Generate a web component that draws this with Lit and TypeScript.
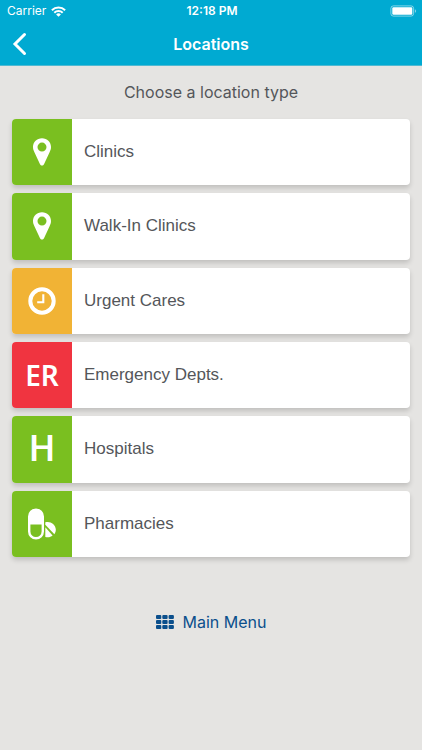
import { LitElement, html, css, svg } from "lit";
import { customElement } from "lit/decorators.js";

type Kind = "pin" | "clock" | "er" | "h" | "pills";

interface LocationType {
  label: string;
  tone: "green" | "amber" | "red";
  kind: Kind;
}

const LOCATION_TYPES: LocationType[] = [
  { label: "Clinics", tone: "green", kind: "pin" },
  { label: "Walk-In Clinics", tone: "green", kind: "pin" },
  { label: "Urgent Cares", tone: "amber", kind: "clock" },
  { label: "Emergency Depts.", tone: "red", kind: "er" },
  { label: "Hospitals", tone: "green", kind: "h" },
  { label: "Pharmacies", tone: "green", kind: "pills" },
];

const pin = html`<svg width="20" height="28" viewBox="0 0 20 28" aria-hidden="true">
  <path fill="#fff" fill-rule="evenodd" d="M10 0.3C4.9 0.3 1 4.200 1 9c0 2 .6 3.500 1.300 5l5.700 12.200c.8 1.800 3.200 1.800 4 0L17.700 14c.7-1.500 1.300-3 1.300-5 0-4.800-3.900-8.700-9-8.700zm0 4.300a4.500 4.500 0 1 1 0 9 4.500 4.500 0 0 1 0-9z"/>
</svg>`;

const clock = html`<svg width="28" height="28" viewBox="0 0 28 28" aria-hidden="true">
  <circle cx="14" cy="14" r="11.700" fill="none" stroke="#fff" stroke-width="4"/>
  <path d="M15.300 7.300v8H9.200" fill="none" stroke="#fff" stroke-width="2.100"/>
</svg>`;

const pills = html`<svg width="30" height="32" viewBox="0 0 30 32" aria-hidden="true">
  <rect x="2.200" y="1.700" width="13.600" height="28.600" rx="6.800" fill="none" stroke="#fff" stroke-width="2.400"/>
  <path fill="#fff" d="M2 16.500V9a7 7 0 0 1 14 0v7.500z"/>
  <path fill="#fff" d="M18.300 14.300c4.500-1.600 10.200 1.500 10.500 7.300 0 2-.5 3.300-1.400 4.600L18.300 16.700z"/>
  <path fill="#fff" d="M18.300 19.200l7.300 8.400c-2 1.700-4.800 2.200-7.300 1.300z"/>
</svg>`;

const GLYPHS: Record<Kind, unknown> = {
  pin,
  clock,
  pills,
  er: html`<span class="er" aria-hidden="true">ER</span>`,
  h: html`<span class="h" aria-hidden="true">H</span>`,
};

@customElement("status-bar")
export class StatusBar extends LitElement {
  static styles = css`
    :host {
      display: grid;
      grid-template-columns: 1fr auto 1fr;
      align-items: center;
      height: 22px;
      padding: 0 5px 0 7px;
      font: 12px/22px Inter, sans-serif;
      color: #fff;
    }
    .carrier {
      display: flex;
      align-items: center;
      gap: 5px;
    }
    .time {
      font-weight: 600;
    }
    .battery {
      justify-self: end;
    }
    svg {
      display: block;
    }
  `;

  render() {
    return html`
      <div class="carrier">
        <span>Carrier</span>
        <svg width="15" height="11" viewBox="0 0 15 11" aria-label="Wi-Fi">
          <g fill="none" stroke="#fff" stroke-width="2">
            <path d="M0.900 4.200a9.400 9.400 0 0 1 13.200 0"/>
            <path d="M3.300 6.700a6 6 0 0 1 8.400 0"/>
          </g>
          <path fill="#fff" d="M7.500 10.800L5.100 8.400a3.400 3.400 0 0 1 4.800 0z"/>
        </svg>
      </div>
      <span class="time">12:18 PM</span>
      <svg class="battery" width="27" height="12" viewBox="0 0 27 12" aria-label="Battery">
        <rect x="0.900" y="0.900" width="22.700" height="10.200" rx="2.500" fill="none" stroke="#fff" stroke-opacity=".5"/>
        <rect x="2.300" y="2.300" width="20" height="7.400" rx="1.200" fill="#fff"/>
        <path d="M24.900 4.200c1.600.5 1.600 3.100 0 3.600z" fill="#fff" fill-opacity=".5"/>
      </svg>
    `;
  }
}

@customElement("app-root")
export class AppRoot extends LitElement {
  static styles = css`
    :host {
      display: flex;
      flex-direction: column;
      min-height: 100vh;
      background: #e5e4e2;
      color: #54565a;
    }
    * {
      box-sizing: border-box;
    }
    svg {
      display: block;
    }
    .top {
      background: #00aad2;
      color: #fff;
      border-bottom: 1px solid #4fb9d2;
    }
    .nav {
      display: grid;
      grid-template-columns: 40px 1fr 40px;
      align-items: center;
      height: 43px;
    }
    .title {
      margin: 0;
      text-align: center;
      font: 600 16px/24px Inter, sans-serif;
    }
    button {
      border: 0;
      margin: 0;
      padding: 0;
      background: none;
      color: inherit;
      cursor: pointer;
    }
    .back {
      padding-left: 12px;
    }
    .prompt {
      margin: 0;
      padding: 14px 0;
      text-align: center;
      font: 16px/25px Inter, sans-serif;
    }
    .list {
      display: grid;
      grid-auto-rows: 1fr;
      gap: 8px;
      min-height: 438px;
      margin: 0 12px;
      padding: 0;
      list-style: none;
    }
    .item {
      display: flex;
    }
    .row {
      display: flex;
      flex: 1;
      align-items: stretch;
      overflow: hidden;
      border-radius: 4px;
      background: #fff;
      box-shadow: 0 3px 5px rgba(0, 0, 0, 0.16);
      font: 17px/24px "Liberation Sans", Arial, sans-serif;
      text-align: left;
    }
    .tile {
      display: flex;
      align-items: center;
      justify-content: center;
      width: 60px;
      color: #fff;
    }
    .green {
      background: #7abf20;
    }
    .amber {
      background: #f1b335;
    }
    .red {
      background: #f03440;
    }
    .er {
      font: 600 28px/40px "Noto Sans", sans-serif;
    }
    .h {
      font: 500 36px/40px Roboto, sans-serif;
    }
    .label {
      align-self: center;
      padding: 0 12px;
    }
    .footer {
      display: flex;
      justify-content: center;
      padding: 52px 0;
    }
    .menu {
      display: flex;
      align-items: center;
      gap: 9px;
      color: #0b4f8c;
      font: 16px/26px Inter, sans-serif;
      text-decoration: none;
    }
  `;

  render() {
    return html`
      <header class="top">
        <status-bar></status-bar>
        <div class="nav">
          <button class="back" aria-label="Back">
            <svg width="16" height="24" viewBox="0 0 16 24" aria-hidden="true">
              <path d="M12.500 2.500L3 12l9.500 9.500" fill="none" stroke="#fff" stroke-width="3" stroke-linecap="round" stroke-linejoin="miter"/>
            </svg>
          </button>
          <h1 class="title">Locations</h1>
        </div>
      </header>
      <main>
        <p class="prompt">Choose a location type</p>
        <ul class="list">
          ${LOCATION_TYPES.map(
            (t) => html`<li class="item">
              <button class="row">
                <span class="tile ${t.tone}">${GLYPHS[t.kind]}</span>
                <span class="label">${t.label}</span>
              </button>
            </li>`
          )}
        </ul>
      </main>
      <footer class="footer">
        <a class="menu" href="#menu">
          <svg width="18" height="14" viewBox="0 0 18 14" aria-hidden="true">
            ${[0, 1, 2].map((r) =>
              [0, 1, 2].map(
                (c) => svg`<rect x=${c * 6.3} y=${r * 5} width="5.300" height="4" rx="1" fill="#0b4f8c"/>`
              )
            )}
          </svg>
          <span>Main Menu</span>
        </a>
      </footer>
    `;
  }
}
